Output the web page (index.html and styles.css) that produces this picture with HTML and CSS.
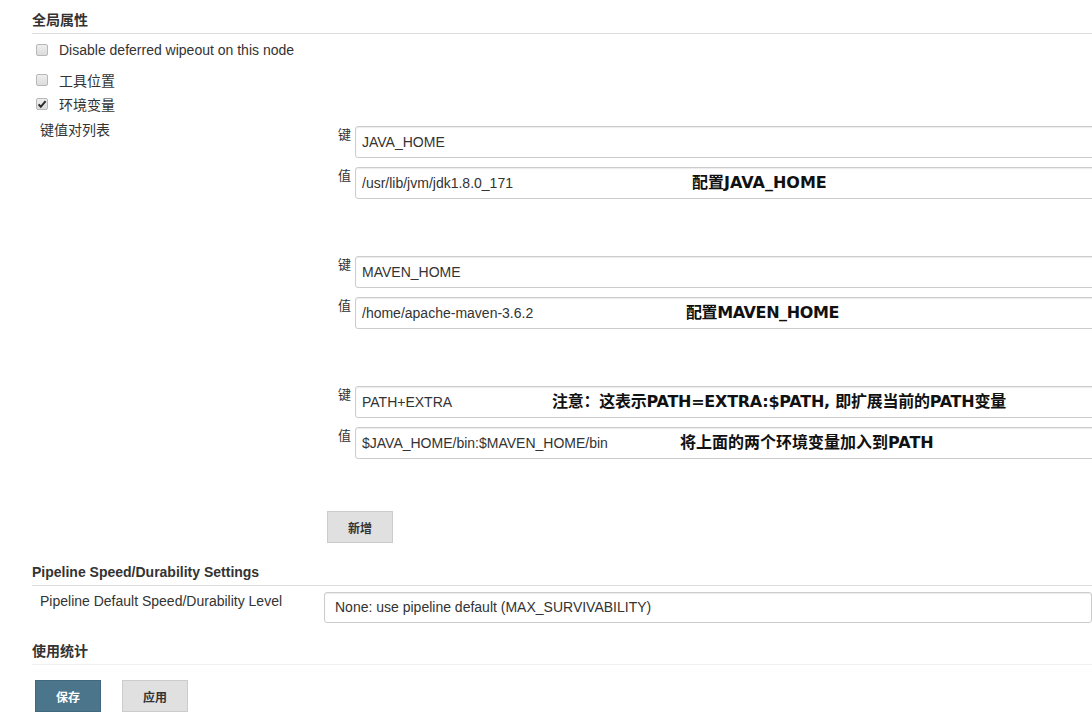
FILE: index.html
```html
<!DOCTYPE html>
<html lang="zh">
<head>
<meta charset="utf-8">
<title>全局属性</title>
<link rel="stylesheet" href="styles.css">
</head>
<body>
<div class="page">
  <div class="section-head first"><span class="cjk">全局属性</span></div>

  <div class="check-row r1">
    <span class="cb"></span>
    <span class="check-label">Disable deferred wipeout on this node</span>
  </div>
  <div class="check-row r2">
    <span class="cb"></span>
    <span class="check-label cjk">工具位置</span>
  </div>
  <div class="check-row r3">
    <span class="cb checked"><svg viewBox="0 0 12 12" width="12" height="12"><path d="M2.6 6.4 L4.8 8.8 L9.6 3.2" fill="none" stroke="#2b2b2b" stroke-width="2"/></svg></span>
    <span class="check-label cjk">环境变量</span>
  </div>

  <div class="kv-row">
    <div class="kv-label cjk">键值对列表</div>
    <div class="kv-entries">
      <div class="entry">
        <div class="field">
          <span class="field-label">键</span>
          <div class="input">JAVA_HOME</div>
        </div>
        <div class="field">
          <span class="field-label">值</span>
          <div class="input">/usr/lib/jvm/jdk1.8.0_171</div>
          <span class="note n1">配置JAVA_HOME</span>
        </div>
      </div>
      <div class="entry">
        <div class="field">
          <span class="field-label">键</span>
          <div class="input">MAVEN_HOME</div>
        </div>
        <div class="field">
          <span class="field-label">值</span>
          <div class="input">/home/apache-maven-3.6.2</div>
          <span class="note n2">配置MAVEN_HOME</span>
        </div>
      </div>
      <div class="entry last">
        <div class="field">
          <span class="field-label">键</span>
          <div class="input">PATH+EXTRA</div>
          <span class="note n3">注意：这表示PATH=EXTRA:$PATH, 即扩展当前的PATH变量</span>
        </div>
        <div class="field">
          <span class="field-label">值</span>
          <div class="input">$JAVA_HOME/bin:$MAVEN_HOME/bin</div>
          <span class="note n4">将上面的两个环境变量加入到PATH</span>
        </div>
      </div>
    </div>
  </div>

  <div class="add-row">
    <button class="btn">新增</button>
  </div>

  <div class="section-head"><span>Pipeline Speed/Durability Settings</span></div>
  <div class="select-row">
    <div class="select-label">Pipeline Default Speed/Durability Level</div>
    <div class="select">None: use pipeline default (MAX_SURVIVABILITY)</div>
  </div>

  <div class="section-head faint"><span class="cjk">使用统计</span></div>

  <div class="actions">
    <button class="btn primary">保存</button>
    <button class="btn">应用</button>
  </div>
</div>
</body>
</html>
```

FILE: styles.css
```css
html, body {
  margin: 0;
  padding: 0;
  overflow: hidden;
  background: #fff;
}
body {
  font-family: "Liberation Sans", Arial, "Noto Sans CJK SC", sans-serif;
  font-size: 14px;
  color: #333;
}
.page {
  width: 1092px;
  height: 720px;
  overflow: hidden;
}
.cjk {
  font-size: 14px;
}
.section-head {
  margin-left: 32px;
  padding-top: 20px;
  padding-bottom: 4px;
  line-height: 18px;
  font-weight: bold;
  border-bottom: 1px solid #dcdcdc;
}
.section-head.first {
  padding-top: 11px;
}
.section-head.faint {
  padding-top: 19px;
  border-bottom-color: #f0f0f0;
}
.check-row {
  display: flex;
  align-items: center;
  height: 24px;
  padding-left: 36px;
}
.check-row.r1 { margin-top: 4px; }
.check-row.r2 { margin-top: 6px; }
.cb {
  box-sizing: border-box;
  width: 12px;
  height: 12px;
  border: 1px solid #b8b8b8;
  border-radius: 2px;
  background: linear-gradient(#eeeeee, #dcdcdc);
  margin-right: 11px;
  display: flex;
  align-items: center;
  justify-content: center;
}
.cb svg {
  display: block;
  margin: -1px;
}
.kv-row {
  display: flex;
  margin-top: 2px;
}
.kv-label {
  width: 298px;
  padding-left: 40px;
  line-height: 24px;
  flex: none;
}
.kv-entries {
  padding-top: 8px;
}
.entry {
  margin-bottom: 57px;
}
.entry.last {
  margin-bottom: 52px;
}
.field {
  position: relative;
  display: flex;
  align-items: flex-start;
}
.field + .field {
  margin-top: 9px;
}
.field-label {
  width: 17px;
  font-size: 13px;
  line-height: 18px;
  flex: none;
}
.input, .select {
  box-sizing: border-box;
  width: 820px;
  height: 32px;
  border: 1px solid #cccccc;
  border-radius: 3px;
  box-shadow: inset 0 1px 1px rgba(0, 0, 0, 0.08);
  padding-left: 6px;
  line-height: 30px;
  background: #fff;
  color: #333;
  white-space: nowrap;
}
.note {
  position: absolute;
  top: 6px;
  font-family: "DejaVu Sans", "Noto Sans CJK SC", "Liberation Sans", sans-serif;
  font-weight: bold;
  font-size: 16px;
  line-height: 20px;
  color: #111;
  white-space: nowrap;
}
.n1 { left: 354px; }
.n2 { left: 348px; letter-spacing: -0.4px; }
.n3 { left: 214px; letter-spacing: -0.25px; }
.n4 { left: 342px; }
.add-row {
  padding-left: 327px;
}
.btn {
  box-sizing: border-box;
  width: 66px;
  height: 32px;
  border: 1px solid #cccccc;
  background: #e0e0e0;
  color: #333;
  font-family: "Liberation Sans", Arial, "Noto Sans CJK SC", sans-serif;
  font-weight: bold;
  font-size: 12px;
  padding: 0;
  margin: 0;
}
.btn.primary {
  background: #4b758b;
  border-color: #41687c;
  color: #fff;
}
.select-row {
  display: flex;
  margin-top: 6px;
}
.select-label {
  width: 284px;
  padding-left: 40px;
  line-height: 18px;
  flex: none;
}
.select {
  height: 31px;
  line-height: 29px;
  padding-left: 10px;
}
.actions {
  display: flex;
  gap: 21px;
  padding-left: 35px;
  margin-top: 15px;
}
```
